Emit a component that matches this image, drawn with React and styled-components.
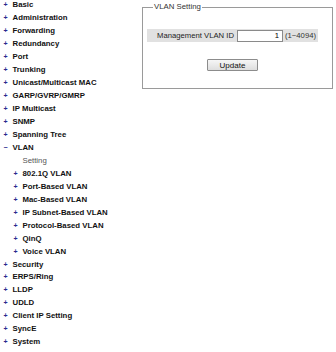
import styled, { createGlobalStyle } from "styled-components";

const GlobalStyle = createGlobalStyle`
  html, body {
    margin: 0;
    padding: 0;
    background: #ffffff;
  }
  body {
    font-family: "Liberation Sans", Arial, sans-serif;
    color: #000;
  }
`;

const menu = [
  { label: "Basic" },
  { label: "Administration" },
  { label: "Forwarding" },
  { label: "Redundancy" },
  { label: "Port" },
  { label: "Trunking" },
  { label: "Unicast/Multicast MAC" },
  { label: "GARP/GVRP/GMRP" },
  { label: "IP Multicast" },
  { label: "SNMP" },
  { label: "Spanning Tree" },
  {
    label: "VLAN",
    open: true,
    children: [
      { label: "Setting", leaf: true },
      { label: "802.1Q VLAN" },
      { label: "Port-Based VLAN" },
      { label: "Mac-Based VLAN" },
      { label: "IP Subnet-Based VLAN" },
      { label: "Protocol-Based VLAN" },
      { label: "QinQ" },
      { label: "Voice VLAN" },
    ],
  },
  { label: "Security" },
  { label: "ERPS/Ring" },
  { label: "LLDP" },
  { label: "UDLD" },
  { label: "Client IP Setting" },
  { label: "SyncE" },
  { label: "System" },
];

export default function App() {
  return (
    <>
      <GlobalStyle />
      <Page>
        <Nav>
          {menu.map((item) => (
            <div key={item.label}>
              <Row $level={0}>
                <Toggle>{item.open ? "−" : "+"}</Toggle>
                <Label>{item.label}</Label>
              </Row>
              {item.open &&
                item.children.map((child) => (
                  <Row key={child.label} $level={1}>
                    <Toggle>{child.leaf ? "" : "+"}</Toggle>
                    <Label $leaf={child.leaf}>{child.label}</Label>
                  </Row>
                ))}
            </div>
          ))}
        </Nav>
        <Main>
          <Fieldset>
            <Legend>VLAN Setting</Legend>
            <FormTable>
              <FieldLabel>Management VLAN ID</FieldLabel>
              <Input defaultValue="1" />
              <Hint>(1~4094)</Hint>
            </FormTable>
            <ButtonRow>
              <Button>Update</Button>
            </ButtonRow>
          </Fieldset>
        </Main>
      </Page>
    </>
  );
}

const Page = styled.div`
  display: flex;
  align-items: flex-start;
`;

const Nav = styled.nav`
  width: 142px;
  flex-shrink: 0;
  margin-top: -1.5px;
`;

const Row = styled.div`
  display: flex;
  align-items: center;
  height: 12.96px;
  padding-left: ${({ $level }) => ($level ? 12 : 2)}px;
  white-space: nowrap;
`;

const Toggle = styled.span`
  width: 10.5px;
  box-sizing: border-box;
  padding-left: 1.5px;
  font-size: 7px;
  font-weight: bold;
  color: #2a2a8e;
`;

const Label = styled.span`
  font-size: 7.8px;
  font-weight: ${({ $leaf }) => ($leaf ? "normal" : "bold")};
  color: ${({ $leaf }) => ($leaf ? "#555" : "#111")};
`;

const Main = styled.main`
  flex: 1;
  padding: 2px 3px 0 0;
`;

const Fieldset = styled.fieldset`
  margin: 0;
  padding: 0 0 17px 4px;
  border: 1px solid #9a9a9a;
  min-width: 0;
`;

const Legend = styled.legend`
  margin-left: 6px;
  padding: 0 1px;
  font-size: 7.8px;
  line-height: 10px;
  color: #333;
`;

const FormTable = styled.div`
  display: flex;
  align-items: center;
  width: 171px;
  height: 13px;
  margin-top: 17px;
  background: #e1e1e1;
`;

const FieldLabel = styled.span`
  width: 89px;
  padding-right: 2px;
  box-sizing: border-box;
  text-align: right;
  font-size: 7.7px;
  color: #222;
`;

const Input = styled.input`
  box-sizing: border-box;
  width: 46px;
  height: 12px;
  margin: 0 2px 0 1px;
  padding: 0 3px;
  border: 1px solid #8a8a8a;
  background: #fff;
  text-align: right;
  font-family: "Liberation Sans", Arial, sans-serif;
  font-size: 7.7px;
  color: #000;
  outline: none;
`;

const Hint = styled.span`
  font-size: 7.7px;
  color: #333;
`;

const ButtonRow = styled.div`
  width: 171px;
  display: flex;
  justify-content: center;
  margin-top: 17px;
`;

const Button = styled.button`
  box-sizing: border-box;
  width: 51px;
  height: 12px;
  padding: 0;
  border: 1px solid #8c8c8c;
  border-radius: 1px;
  background: linear-gradient(#f6f6f6, #dedede);
  font-family: "Liberation Sans", Arial, sans-serif;
  font-size: 8px;
  color: #111;
`;
